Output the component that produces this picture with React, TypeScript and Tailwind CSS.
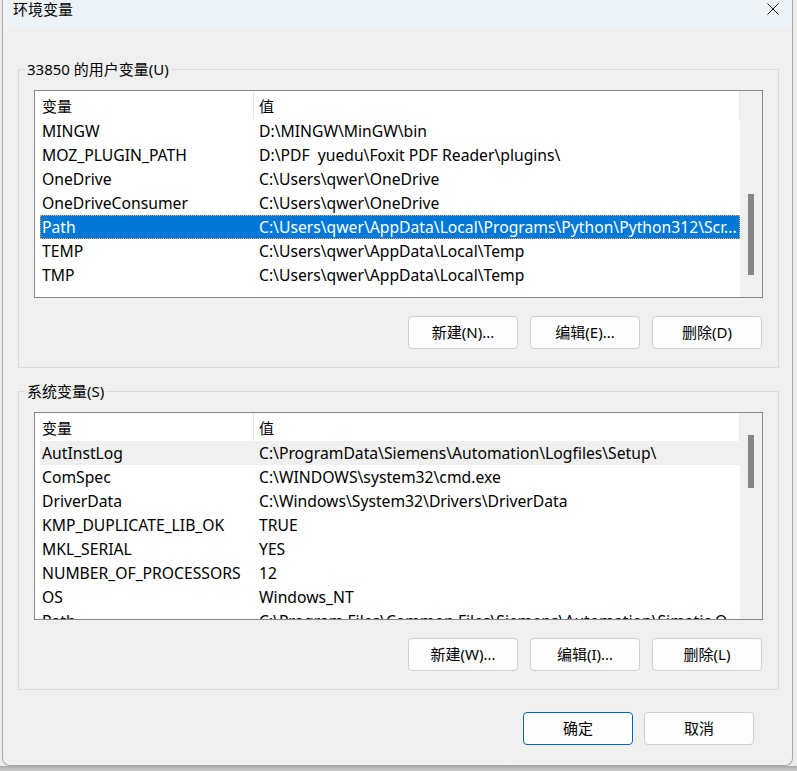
import React from "react";

type Row = { name: string; value: string };

const userRows: Row[] = [
  { name: "MINGW", value: "D:\\MINGW\\MinGW\\bin" },
  { name: "MOZ_PLUGIN_PATH", value: "D:\\PDF  yuedu\\Foxit PDF Reader\\plugins\\" },
  { name: "OneDrive", value: "C:\\Users\\qwer\\OneDrive" },
  { name: "OneDriveConsumer", value: "C:\\Users\\qwer\\OneDrive" },
  { name: "Path", value: "C:\\Users\\qwer\\AppData\\Local\\Programs\\Python\\Python312\\Scr..." },
  { name: "TEMP", value: "C:\\Users\\qwer\\AppData\\Local\\Temp" },
  { name: "TMP", value: "C:\\Users\\qwer\\AppData\\Local\\Temp" },
];

const systemRows: Row[] = [
  { name: "AutInstLog", value: "C:\\ProgramData\\Siemens\\Automation\\Logfiles\\Setup\\" },
  { name: "ComSpec", value: "C:\\WINDOWS\\system32\\cmd.exe" },
  { name: "DriverData", value: "C:\\Windows\\System32\\Drivers\\DriverData" },
  { name: "KMP_DUPLICATE_LIB_OK", value: "TRUE" },
  { name: "MKL_SERIAL", value: "YES" },
  { name: "NUMBER_OF_PROCESSORS", value: "12" },
  { name: "OS", value: "Windows_NT" },
  { name: "Path", value: "C:\\Program Files\\Common Files\\Siemens\\Automation\\Simatic O..." },
];

function VarList({
  rows,
  selected,
  hover,
  thumb,
}: {
  rows: Row[];
  selected?: number;
  hover?: number;
  thumb: "user" | "system";
}) {
  return (
    <div className="flex h-[208px] w-[729px] border border-[#828790] bg-white">
      <div className="flex min-w-0 flex-1 flex-col overflow-hidden pl-[5px]">
        <div className="flex h-[28px] shrink-0">
          <div className="flex w-[214px] items-center border-r border-[#e5e5e5] pl-[2px] pt-[3px]">变量</div>
          <div className="flex flex-1 items-center border-r border-[#e5e5e5] pl-[5px] pt-[3px]">值</div>
        </div>
        {rows.map((r, i) => (
          <div
            key={r.name + i}
            className={
              "flex h-[24px] shrink-0 items-center whitespace-pre pt-[1px] text-[15.7px] " +
              (i === selected
                ? "bg-[#0078d7] text-white outline-1 -outline-offset-1 outline-dotted outline-[#f0a868]"
                : i === hover
                ? "bg-[#f0f0f0]"
                : "")
            }
          >
            <div className="w-[214px] shrink-0 overflow-hidden pl-[2px]">{r.name}</div>
            <div className="min-w-0 flex-1 overflow-hidden pl-[5px]">{r.value}</div>
          </div>
        ))}
      </div>
      <div className="w-[22px] shrink-0 bg-[#f0f0f0] pl-[8px]">
        {thumb === "user" ? (
          <div className="mt-[103px] h-[81px] w-[6px] bg-[#858585]" />
        ) : (
          <div className="mt-[22px] h-[53px] w-[6px] bg-[#858585]" />
        )}
      </div>
    </div>
  );
}

function Btn({ children, primary }: { children: React.ReactNode; primary?: boolean }) {
  return (
    <button
      className={
        "flex h-[33px] w-[110px] items-center justify-center rounded-[4px] border bg-[#fdfdfd] " +
        (primary ? "border-[#0067c0]" : "border-[#d0d0d0]")
      }
    >
      {children}
    </button>
  );
}

function Group({ label, children }: { label: string; children: React.ReactNode }) {
  return (
    <fieldset className="w-[761px] border border-[#dcdcdc] px-[15px] pb-[18px] pt-[12px]">
      <legend className="-ml-[9px] px-[2px] leading-[18px]">{label}</legend>
      {children}
    </fieldset>
  );
}

export default function App() {
  return (
    <div className="h-[771px] w-[797px] overflow-hidden bg-[#ebebeb] font-['Noto_Sans','Noto_Sans_CJK_SC',sans-serif] text-[15px] text-black">
      <div className="ml-[2px] flex h-[766px] w-[791px] flex-col overflow-hidden rounded-b-[8px] border-x border-b border-[#a8a8a8] bg-[#f0f0f0]">
        <div className="flex h-[28px] shrink-0 items-start justify-between bg-[#eef3f8] pl-[10px] pr-[13px]">
          <span className="leading-[18px]">环境变量</span>
          <svg className="mt-[3px]" width="12" height="12" viewBox="0 0 12 12">
            <path d="M0.5 0.5 L11.5 11.5 M11.5 0.5 L0.5 11.5" stroke="#1a1a1a" strokeWidth="1" />
          </svg>
        </div>

        <div className="ml-[15px] mt-[32px] flex flex-col">
          <Group label="33850 的用户变量(U)">
            <VarList rows={userRows} selected={4} thumb="user" />
            <div className="mr-[1px] mt-[18px] flex justify-end gap-[12px]">
              <Btn>新建(N)...</Btn>
              <Btn>编辑(E)...</Btn>
              <Btn>删除(D)</Btn>
            </div>
          </Group>

          <div className="mt-[14px]">
            <Group label="系统变量(S)">
              <VarList rows={systemRows} hover={0} thumb="system" />
              <div className="mr-[1px] mt-[18px] flex justify-end gap-[12px]">
                <Btn>新建(W)...</Btn>
                <Btn>编辑(I)...</Btn>
                <Btn>删除(L)</Btn>
              </div>
            </Group>
          </div>
        </div>

        <div className="mr-[38px] mt-[22px] flex justify-end gap-[11px]">
          <Btn primary>确定</Btn>
          <Btn>取消</Btn>
        </div>
      </div>
      <div className="h-[5px] bg-gradient-to-b from-[#a9a9a9] to-[#d0d0d0]" />
    </div>
  );
}
